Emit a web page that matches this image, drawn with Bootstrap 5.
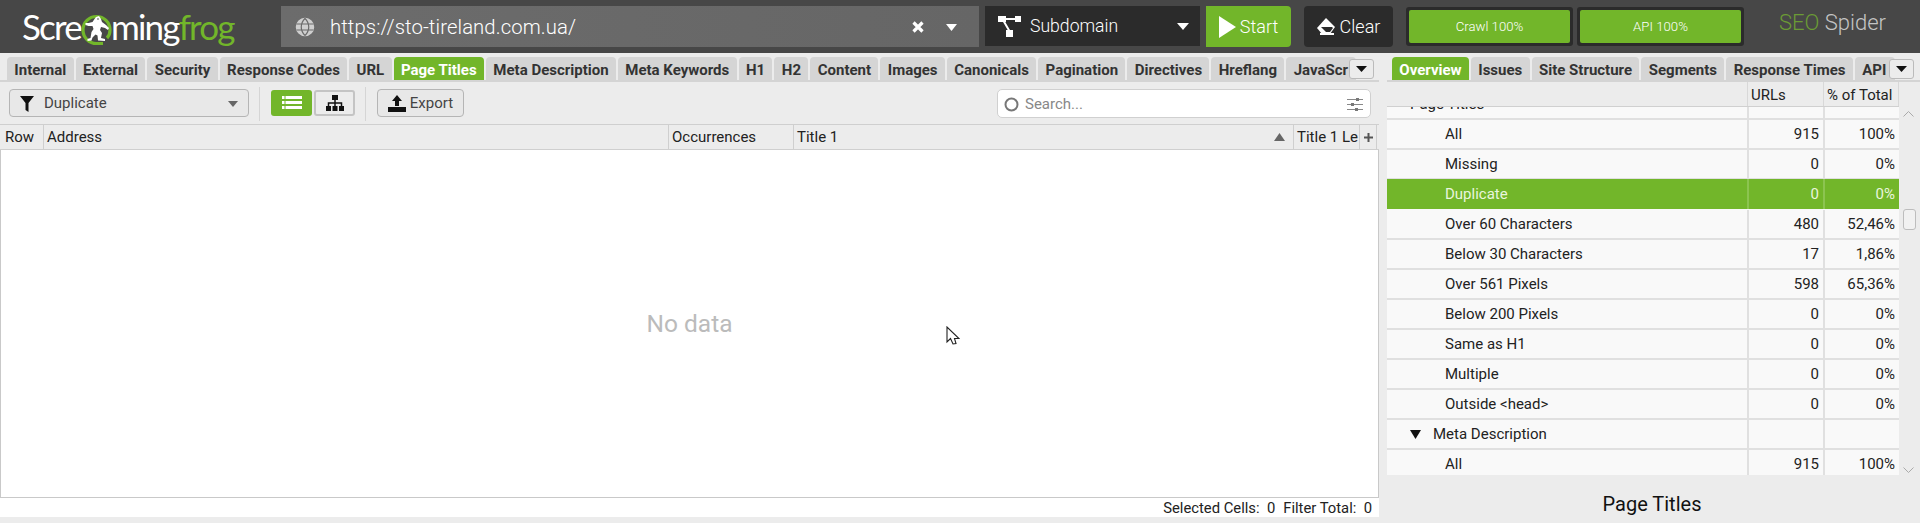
<!DOCTYPE html>
<html lang="en">
<head>
<meta charset="utf-8">
<title>Screaming Frog SEO Spider</title>
<link href="https://cdn.jsdelivr.net/npm/bootstrap@5.3.0/dist/css/bootstrap.min.css" rel="stylesheet">
<style>
html,body{height:523px;overflow:hidden}
body{background:#ececec;font-family:Roboto,"Liberation Sans",sans-serif;color:#222;font-size:15px;position:relative}
.topbar{height:53px;background:#474747;padding:6px 0 6px 0;border-bottom:0}
.logo{width:281px;padding-left:22px;font-family:Lato,sans-serif;font-weight:400;font-size:35px;line-height:40px;letter-spacing:-1.8px;color:#fff;white-space:nowrap}
.logo svg{margin:0 -1px 0 0;vertical-align:-7px}
.logo .gr{color:#72b62a}
.urlbar{width:698px;height:41px;background:linear-gradient(90deg,#6c6c6c,#666);color:#fff;font-size:20.3px;font-weight:300;padding:1px 22px 0 14px}
.urlbar .urltext{margin-left:15px;letter-spacing:.1px}
.modebox{width:215px;height:40px;margin-left:6px;background:#2b2b2b;color:#fff;font-size:17.6px;font-weight:300;padding:0 11px 0 13px}
.modebox .mt{margin-left:9px}
.startbtn{width:85px;height:41px;margin-left:6px;background:#72b62a;color:#fff;font-size:18px;font-weight:300;border-radius:0 4px 4px 0}
.clearbtn{width:89px;height:41px;margin-left:13px;background:#2b2b2b;color:#fff;font-size:18px;font-weight:300;border-radius:4px}
.progbox{width:167px;height:39px;background:#2b2b2b;padding:3px;border-radius:3px;margin-top:1px}
.progbox>div{height:100%;background:#72b62a;border-radius:2px;color:#fff;font-size:13.2px;font-weight:300}
.seoword{margin-left:35px;font-size:22px;font-weight:300;color:#c4c4c4;white-space:nowrap}
.seoword span{color:#6b9b35}
.mainarea{height:470px}
.leftside{width:1379px}
.rightside{margin-left:8px;width:533px}
.tabstrip{height:29px;padding-top:4px;border-bottom:2px solid #d4d4d4;overflow:hidden;position:relative}
.tabitem{background:#d5d5d5;color:#333;font-weight:700;font-size:15px;height:24px;line-height:26px;padding:0 7.350px;border-radius:4px 4px 0 0;margin-right:2px;white-space:nowrap;flex:none}
.tabitem.on{background:#72b62a;color:#fff}
.tabitem.cutend{padding-right:0;margin-right:0;width:70px}
.tabitem.apitab{padding-right:0;margin-right:0;width:40px}
.tabmore{position:absolute;top:6px;width:25px;height:20px;background:#ececec;border:1px solid #bbb;border-radius:3px}
.toolrow{height:42px;padding:7px 0 0 9px}
.filtersel{width:240px;height:28px;border:1px solid #b5b5b5;border-radius:4px;background:#e8e8e8;padding:1px 10px 0;color:#444}
.filtersel .ft{margin-left:10px}
.sepbar{width:1px;height:34px;background:#d5d5d5;margin:-2px 11px 0 10px}
.viewbtn{width:41px;height:26px;background:#72b62a;border-radius:3px;margin-top:1px}
.viewbtn.off{background:#ececec;border:2px solid #c4c4c4;margin-left:2px}
.exportbtn{width:87px;height:28px;border:1px solid #b5b5b5;border-radius:4px;background:#e8e8e8;color:#444;font-size:15px;padding-top:1px}
.searchbox{width:374px;height:29px;margin:0 8px 0 auto;background:#fff;border:1px solid #d0d0d0;border-radius:5px;padding:1px 7px 0 6px;color:#888;font-size:15px}
.searchbox .st{margin-left:6px}
.gridhead{height:26px;background:#ececec;border-top:1px solid #cfcfcf;border-bottom:1px solid #cfcfcf;font-size:15px;line-height:25px;width:1379px}
.gridhead>div{border-right:1px solid #cfcfcf;padding-left:3px;white-space:nowrap;overflow:hidden;flex:none}
.gridhead>div.rowcol{padding-left:5px}
.gridbody{height:348px;width:1379px;background:#fff;border:1px solid #c9c9c9;border-top:0;padding-top:1px}
.nodata{font-size:24.5px;color:#bbb;font-weight:400}
.statusline{height:19px;width:1379px;background:#fff;font-size:14.8px;line-height:20px;padding-right:7px;color:#222}
.statusline span{margin-left:8px}
.overhead{height:25px;line-height:26px;background:#ececec;border-bottom:1px solid #d0d0d0;margin-right:21px}
.overhead .c2{width:76px;padding-left:3px;border-left:1px solid #d8d8d8}
.overhead .c3{width:76px;padding-left:3px;border-left:1px solid #d8d8d8;border-right:1px solid #d8d8d8}
.treebox{height:369px;overflow:hidden;width:533px}
.treescroll{width:512px;height:368px;overflow:hidden;background:#f9f9f9}
.treeinner{margin-top:-17px}
.treerow{height:30px;line-height:29px;border-bottom:2px solid #e0e0e0;background:#f9f9f9;color:#222}
.treerow .c1{width:360px;white-space:nowrap;padding-left:58px}
.treerow .c1.grp{padding-left:23px}
.treerow .c2{width:76px;text-align:right;padding-right:4px;border-left:2px solid #e0e0e0}
.treerow .c3{width:76px;text-align:right;padding-right:4px;border-left:2px solid #e0e0e0}
.treerow.sel,.treerow.sel .c2,.treerow.sel .c3{background:#72b62a;color:#e9f5dd;border-color:#8cc450;line-height:31px}
.treerow.sel{border-bottom:0;height:30px;margin-top:-1px;margin-bottom:1px}
.scrolltrack{width:21px;height:369px;padding:0 3px 0 0}
.upchev{margin-top:4px}
.downchev{margin-bottom:3px}
.thumbbar{width:13px;height:21px;border:1px solid #bdbdbd;border-radius:3px;background:#f1f1f1;margin-top:92px;margin-bottom:auto;margin-left:2px}
.paneltitle{font-size:20px;font-weight:400;color:#111;text-align:center;height:52px;line-height:57px;margin-right:3px}
.arrowcursor{position:absolute;left:946px;top:326px}
</style>
</head>
<body>
<div class="topbar d-flex align-items-start">
  <div class="logo">Scre<svg width="31" height="33" viewBox="0 0 31 33"><path d="M22 29.500h-6.500a13.500 13.500 0 1 1 13.500-13.500c0 3-1 6-3 8" fill="none" stroke="#72b62a" stroke-width="3.200"/><path d="M15 3l3-1 2 3 1 3 4 3 3 3-1 2-3-2-4-1-1 3 2 3-1 5 4 1v2l-7-.5-.5-5-2-1-3 3-1 3-4 .5v-2l3-1 1-6 2-3-1-3-4 0-3-1 0-2 3 0 4-1 2-3z" fill="#fff"/><circle cx="17" cy="5" r=".8" fill="#474747"/></svg>ming<span class="gr">frog</span></div>
  <div class="urlbar d-flex align-items-center">
    <svg width="20" height="20" viewBox="0 0 20 20" fill="none" stroke="#cfcfcf" stroke-width="1.500"><circle cx="10" cy="10" r="8.500" fill="#cfcfcf"/><path d="M1.500 7h17M1.500 13h17M10 1.500c-5 5-5 12 0 17M10 1.500c5 5 5 12 0 17" stroke="#6a6a6a" stroke-width="1.200"/></svg>
    <span class="urltext">https://sto-tireland.com.ua/</span>
    <svg class="ms-auto" width="12" height="12" viewBox="0 0 12 12"><path d="M1.500 1.500l9 9M10.500 1.500l-9 9" stroke="#fff" stroke-width="3.200"/></svg>
    <svg style="margin-left:22px" width="11" height="7" viewBox="0 0 11 7"><path d="M0 0h11L5.500 7z" fill="#fff"/></svg>
  </div>
  <div class="modebox d-flex align-items-center">
    <svg width="23" height="22" viewBox="0 0 23 22"><path d="M4 4h15M5 5l7 12" stroke="#fff" stroke-width="2"/><path d="M0 1h8v6H0zM17 1h6v6h-6zM8 15h7v7H8z" fill="#fff"/></svg>
    <span class="mt">Subdomain</span>
    <svg class="ms-auto" width="12" height="7" viewBox="0 0 12 7"><path d="M0 0h12L6 7z" fill="#fff"/></svg>
  </div>
  <div class="startbtn d-flex align-items-center justify-content-center gap-1">
    <svg width="17" height="22" viewBox="0 0 17 22"><path d="M0 0l17 11L0 22z" fill="#fff"/></svg><span>Start</span>
  </div>
  <div class="clearbtn d-flex align-items-center justify-content-center gap-1">
    <svg width="19" height="17" viewBox="0 0 19 17"><path d="M9 0l9 9-5 7H5l-5-6z" fill="#fff"/><path d="M4 9l5 5h4l3-4-1-1z" fill="#2b2b2b"/><path d="M3 15h14v2H3z" fill="#fff"/></svg><span>Clear</span>
  </div>
  <div class="progbox" style="margin-left:13px"><div class="d-flex align-items-center justify-content-center">Crawl 100%</div></div>
  <div class="progbox" style="margin-left:4px"><div class="d-flex align-items-center justify-content-center">API 100%</div></div>
  <div class="seoword"><span>SEO</span> Spider</div>
</div>
<div class="mainarea d-flex">
  <div class="leftside">
    <div class="tabstrip d-flex" style="padding-left:7px">
      <div class="tabitem">Internal</div><div class="tabitem">External</div><div class="tabitem">Security</div><div class="tabitem">Response Codes</div><div class="tabitem">URL</div><div class="tabitem on">Page Titles</div><div class="tabitem">Meta Description</div><div class="tabitem">Meta Keywords</div><div class="tabitem">H1</div><div class="tabitem">H2</div><div class="tabitem">Content</div><div class="tabitem">Images</div><div class="tabitem">Canonicals</div><div class="tabitem">Pagination</div><div class="tabitem">Directives</div><div class="tabitem">Hreflang</div><div class="tabitem cutend">JavaScr</div>
      <div class="tabmore d-flex align-items-center justify-content-center" style="left:1349px"><svg width="11" height="6" viewBox="0 0 11 6"><path d="M0 0h11L5.500 6z" fill="#111"/></svg></div>
    </div>
    <div class="toolrow d-flex align-items-start">
      <div class="filtersel d-flex align-items-center">
        <svg width="14" height="16" viewBox="0 0 14 16"><path d="M0 0h14L8.500 7v9l-3-2V7z" fill="#111"/></svg>
        <span class="ft">Duplicate</span>
        <svg class="ms-auto" width="10" height="6" viewBox="0 0 10 6"><path d="M0 0h10L5 6z" fill="#666"/></svg>
      </div>
      <div class="sepbar"></div>
      <div class="viewbtn d-flex align-items-center justify-content-center"><svg width="20" height="14" viewBox="0 0 20 14"><path d="M0 0h20v3H0zM0 5h20v3H0zM0 10h20v3H0z" fill="#fff"/><path d="M3 0v13" stroke="#72b62a"/></svg></div>
      <div class="viewbtn off d-flex align-items-center justify-content-center"><svg width="18" height="16" viewBox="0 0 18 16"><path d="M6 0h6v5H6zM0 11h5v5H0zM6.500 11h5v5h-5zM13 11h5v5h-5z" fill="#111"/><path d="M9 5v6M2.500 11V8h13v3" fill="none" stroke="#111" stroke-width="1.500"/></svg></div>
      <div class="sepbar"></div>
      <div class="exportbtn d-flex align-items-center justify-content-center gap-1">
        <svg width="18" height="18" viewBox="0 0 18 18"><path d="M9 0l5 6h-3v5H7V6H4z" fill="#111"/><path d="M0 12h18v5H0z" fill="#111"/></svg><span>Export</span>
      </div>
      <div class="searchbox d-flex align-items-center">
        <svg width="15" height="15" viewBox="0 0 15 15"><circle cx="7.500" cy="7.500" r="6" fill="none" stroke="#777" stroke-width="2"/></svg>
        <span class="st">Search...</span>
        <svg class="ms-auto" width="16" height="15" viewBox="0 0 16 15"><path d="M0 2.500h16M0 7.500h16M0 12.500h16" stroke="#888"/><path d="M9 1h3v3H9zM4 6h3v3H4zM8 11h3v3H8z" fill="#777"/></svg>
      </div>
    </div>
    <div class="gridhead d-flex">
      <div class="rowcol" style="width:44px">Row</div><div style="width:625px">Address</div><div style="width:125px">Occurrences</div>
      <div class="d-flex align-items-center" style="width:500px"><span>Title 1</span><svg class="ms-auto me-2" width="11" height="8" viewBox="0 0 11 8"><path d="M0 8h11L5.500 0z" fill="#666"/></svg></div>
      <div style="width:66px">Title 1 Le</div>
      <div class="d-flex align-items-center justify-content-center" style="width:17px;padding:0"><svg width="9" height="9" viewBox="0 0 9 9"><path d="M4.500 0v9M0 4.500h9" stroke="#555" stroke-width="2"/></svg></div>
    </div>
    <div class="gridbody d-flex align-items-center justify-content-center"><span class="nodata">No data</span></div>
    <div class="statusline d-flex justify-content-end"><span>Selected Cells:&nbsp; 0</span><span>Filter Total:&nbsp; 0</span></div>
  </div>
  <div class="rightside">
    <div class="tabstrip d-flex" style="padding-left:5px">
      <div class="tabitem on">Overview</div><div class="tabitem">Issues</div><div class="tabitem">Site Structure</div><div class="tabitem">Segments</div><div class="tabitem">Response Times</div><div class="tabitem apitab">API</div>
      <div class="tabmore d-flex align-items-center justify-content-center" style="left:502px"><svg width="11" height="6" viewBox="0 0 11 6"><path d="M0 0h11L5.500 6z" fill="#111"/></svg></div>
    </div>
    <div class="overhead d-flex"><div class="flex-grow-1"></div><div class="c2">URLs</div><div class="c3">% of Total</div></div>
    <div class="treebox d-flex">
      <div class="treescroll"><div class="treeinner">
        <div class="treerow d-flex"><div class="c1 grp">Page Titles</div><div class="c2"></div><div class="c3"></div></div>
        <div class="treerow d-flex"><div class="c1">All</div><div class="c2">915</div><div class="c3">100%</div></div>
        <div class="treerow d-flex"><div class="c1">Missing</div><div class="c2">0</div><div class="c3">0%</div></div>
        <div class="treerow sel d-flex"><div class="c1">Duplicate</div><div class="c2">0</div><div class="c3">0%</div></div>
        <div class="treerow d-flex"><div class="c1">Over 60 Characters</div><div class="c2">480</div><div class="c3">52,46%</div></div>
        <div class="treerow d-flex"><div class="c1">Below 30 Characters</div><div class="c2">17</div><div class="c3">1,86%</div></div>
        <div class="treerow d-flex"><div class="c1">Over 561 Pixels</div><div class="c2">598</div><div class="c3">65,36%</div></div>
        <div class="treerow d-flex"><div class="c1">Below 200 Pixels</div><div class="c2">0</div><div class="c3">0%</div></div>
        <div class="treerow d-flex"><div class="c1">Same as H1</div><div class="c2">0</div><div class="c3">0%</div></div>
        <div class="treerow d-flex"><div class="c1">Multiple</div><div class="c2">0</div><div class="c3">0%</div></div>
        <div class="treerow d-flex"><div class="c1">Outside &lt;head&gt;</div><div class="c2">0</div><div class="c3">0%</div></div>
        <div class="treerow d-flex"><div class="c1 grp d-flex align-items-center"><svg width="11" height="9" viewBox="0 0 11 9" class="me-2"><path d="M0 0h11L5.500 9z" fill="#111"/></svg><span class="ps-1">Meta Description</span></div><div class="c2"></div><div class="c3"></div></div>
        <div class="treerow d-flex"><div class="c1">All</div><div class="c2">915</div><div class="c3">100%</div></div>
      </div></div>
      <div class="scrolltrack d-flex flex-column align-items-center">
        <svg class="upchev" width="11" height="6" viewBox="0 0 11 6"><path d="M.5 5.500l5-5 5 5" fill="none" stroke="#aaa"/></svg>
        <div class="thumbbar"></div>
        <svg class="downchev" width="11" height="6" viewBox="0 0 11 6"><path d="M.5.500l5 5 5-5" fill="none" stroke="#aaa"/></svg>
      </div>
    </div>
    <div class="paneltitle">Page Titles</div>
  </div>
</div>
<svg class="arrowcursor" width="14" height="21" viewBox="0 0 14 21"><path d="M1 1v15l3.500-3.500L7 18l3-.5-1.500-5H13z" fill="#fff" stroke="#222" stroke-width="1.100"/></svg>
</body>
</html>
